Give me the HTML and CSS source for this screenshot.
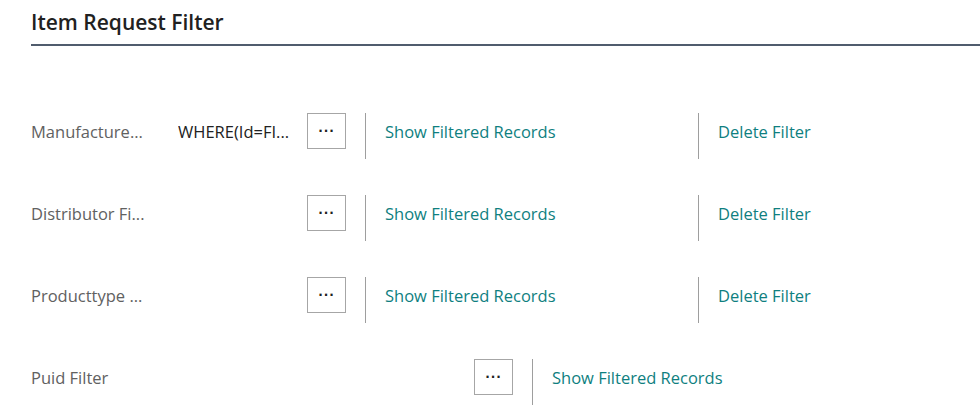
FILE: index.html
```html
<!DOCTYPE html>
<html lang="en">
<head>
  <meta charset="UTF-8">
  <title>Item Request Filter</title>
  <link rel="stylesheet" href="styles.css">
</head>
<body>
  <div class="page">
    <header class="caption">
      <h1>Item Request Filter</h1>
    </header>

    <section class="filters">
      <div class="row">
        <span class="label">Manufacture...</span>
        <span class="value">WHERE(Id=FI...</span>
        <button class="assist" type="button">&middot;&middot;&middot;</button>
        <a class="action" href="#">Show Filtered Records</a>
        <a class="action" href="#">Delete Filter</a>
      </div>

      <div class="row">
        <span class="label">Distributor Fi...</span>
        <span class="value"></span>
        <button class="assist" type="button">&middot;&middot;&middot;</button>
        <a class="action" href="#">Show Filtered Records</a>
        <a class="action" href="#">Delete Filter</a>
      </div>

      <div class="row">
        <span class="label">Producttype ...</span>
        <span class="value"></span>
        <button class="assist" type="button">&middot;&middot;&middot;</button>
        <a class="action" href="#">Show Filtered Records</a>
        <a class="action" href="#">Delete Filter</a>
      </div>

      <div class="row">
        <span class="label label-wide">Puid Filter</span>
        <button class="assist" type="button">&middot;&middot;&middot;</button>
        <a class="action" href="#">Show Filtered Records</a>
      </div>
    </section>
  </div>
</body>
</html>
```

FILE: styles.css
```css
* {
  margin: 0;
  padding: 0;
  box-sizing: border-box;
}

html,
body {
  height: 100%;
  overflow: hidden;
}

body {
  font-family: "Open Sans", sans-serif;
  background: #ffffff;
  color: #212121;
}

.page {
  padding-left: 31px;
}

.caption {
  height: 46px;
  border-bottom: 2px solid #505c6d;
  padding-top: 8px;
}

.caption h1 {
  font-size: 21px;
  font-weight: 600;
  line-height: 28px;
  color: #212121;
}

.filters {
  padding-top: 67px;
}

.row {
  display: flex;
  align-items: flex-start;
  height: 46px;
  margin-bottom: 36px;
  font-size: 16.5px;
  line-height: 38px;
}

.row:last-child {
  margin-bottom: 0;
}

.row > * {
  flex-shrink: 0;
}

.label {
  width: 147px;
  color: #616161;
  white-space: nowrap;
}

.label-wide {
  width: 443px;
}

.value {
  width: 129px;
  color: #212121;
  white-space: nowrap;
  overflow: hidden;
}

.assist {
  width: 39px;
  height: 36px;
  border: 1px solid #a6a6a6;
  background: #ffffff;
  color: #212121;
  font-family: "DejaVu Sans", sans-serif;
  font-size: 12px;
  font-weight: bold;
  line-height: 34px;
  letter-spacing: 1px;
  margin-right: 19px;
}

.action {
  width: 333px;
  height: 46px;
  border-left: 1px solid #9e9e9e;
  padding-left: 19px;
  color: #0f7f7f;
  text-decoration: none;
  white-space: nowrap;
}

.action:last-child {
  width: auto;
  flex-shrink: 1;
}
```
